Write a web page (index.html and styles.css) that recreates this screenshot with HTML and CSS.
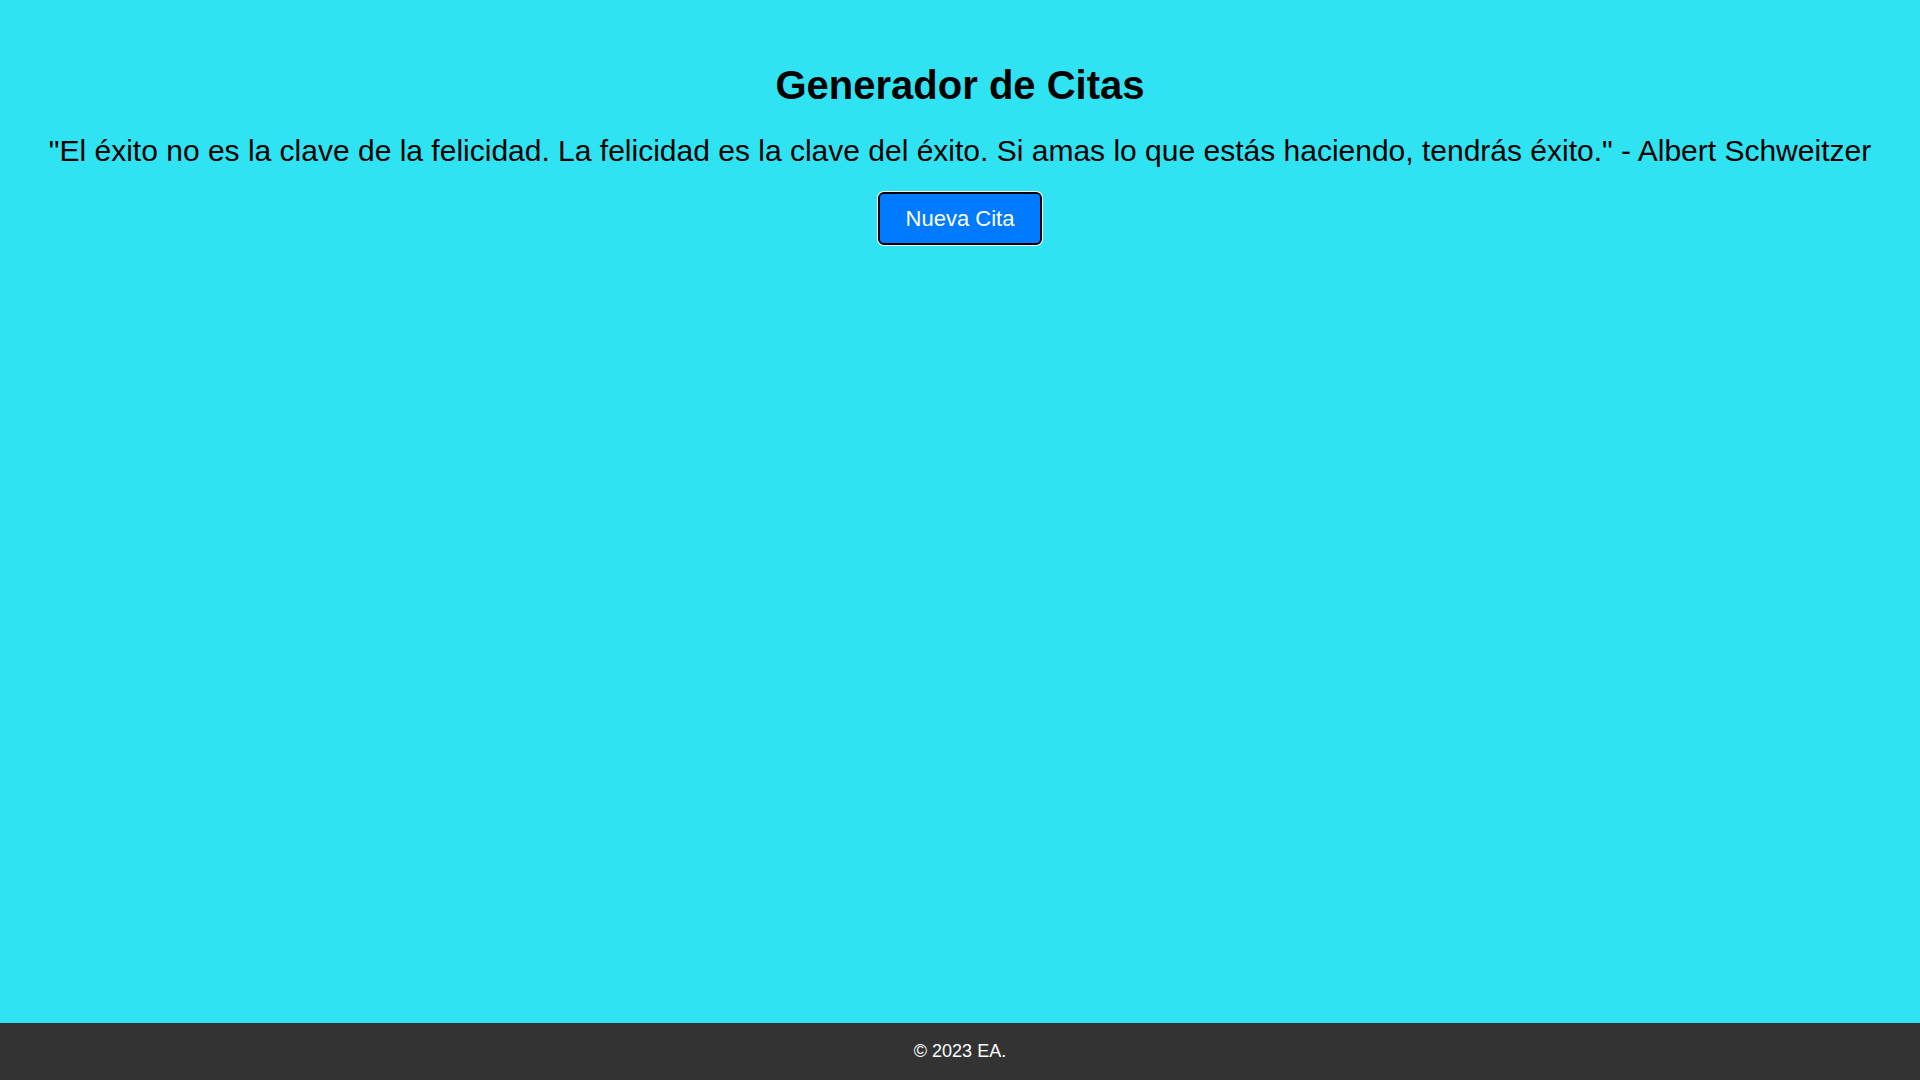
FILE: index.html
```html
<!DOCTYPE html>
<html lang="es">
<head>
<meta charset="utf-8">
<title>Generador de Citas</title>
<link rel="stylesheet" href="styles.css">
</head>
<body>
<main class="container">
  <h1 class="title">Generador de Citas</h1>
  <p class="quote">"El éxito no es la clave de la felicidad. La felicidad es la clave del éxito. Si amas lo que estás haciendo, tendrás éxito." - Albert Schweitzer</p>
  <button class="btn">Nueva Cita</button>
</main>
<footer class="footer">© 2023 EA.</footer>
</body>
</html>
```
FILE: styles.css
```css
html, body {
  margin: 0;
  padding: 0;
  height: 100%;
}
body {
  background: #2fe3f3;
  font-family: "Liberation Sans", Arial, sans-serif;
  color: #000;
  display: flex;
  flex-direction: column;
}
.container {
  flex: 1;
  text-align: center;
  padding-top: 62px;
}
.title {
  font-size: 40px;
  font-weight: bold;
  margin: 0 0 26px;
  line-height: 46px;
}
.quote {
  font-size: 30px;
  margin: 0 0 24px;
  line-height: 34px;
}
.btn {
  font-family: "Liberation Sans", Arial, sans-serif;
  font-size: 22px;
  line-height: 25px;
  color: #fff;
  background: #007bff;
  border: 2px solid #000;
  box-shadow: 0 0 0 1px #fff;
  border-radius: 6px;
  padding: 12px 26px;
  cursor: pointer;
}
.footer {
  background: #333;
  color: #fff;
  text-align: center;
  font-size: 18px;
  height: 57px;
  line-height: 57px;
}
```
